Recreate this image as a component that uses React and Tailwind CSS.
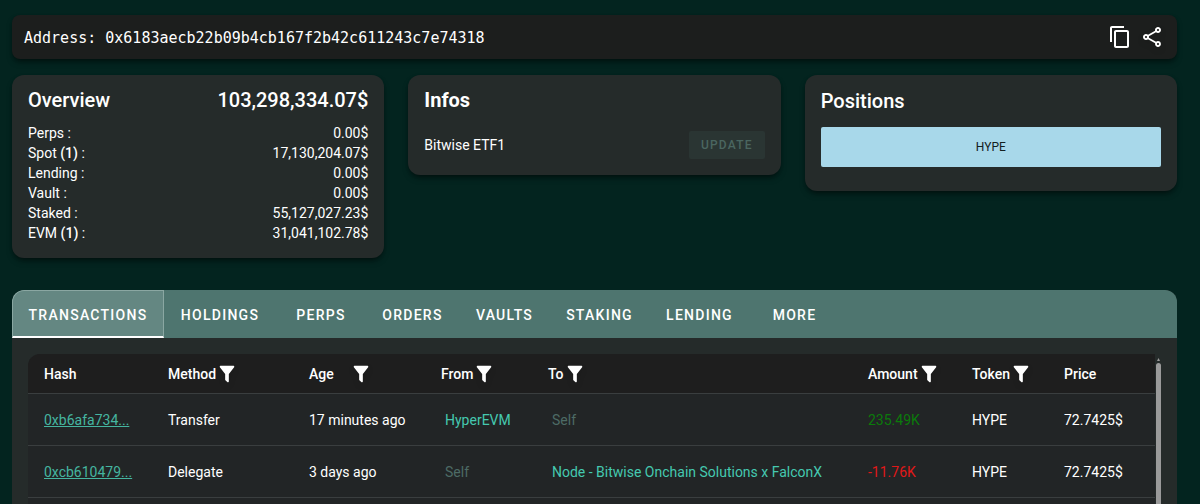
import { MdContentCopy, MdOutlineShare } from "react-icons/md";

const balances = [
  { label: "Perps", value: "0.00$" },
  { label: "Spot", count: "(1)", value: "17,130,204.07$" },
  { label: "Lending", value: "0.00$" },
  { label: "Vault", value: "0.00$" },
  { label: "Staked", value: "55,127,027.23$" },
  { label: "EVM", count: "(1)", value: "31,041,102.78$" },
];

const tabs = [
  { name: "Transactions", width: "w-38" },
  { name: "Holdings", width: "w-28" },
  { name: "Perps", width: "w-[90px]" },
  { name: "Orders", width: "w-[93px]" },
  { name: "Vaults", width: "w-[91px]" },
  { name: "Staking", width: "w-[99px]" },
  { name: "Lending", width: "w-[101px]" },
  { name: "More", width: "w-[89px]" },
];

const columns = [
  { name: "Hash", width: "w-[124px]" },
  { name: "Method", width: "w-[141px]", filter: true },
  { name: "Age", width: "w-[132px]", filter: true, gap: "gap-4" },
  { name: "From", width: "w-[107px]", filter: true },
  { name: "To", width: "", filter: true },
  { name: "Amount", width: "w-[104px]", filter: true },
  { name: "Token", width: "w-[92px]", filter: true },
  { name: "Price", width: "w-[107px]" },
];

const rows = [
  { hash: "0xb6afa734...", method: "Transfer", age: "17 minutes ago", from: "HyperEVM", to: "Self", amount: "235.49K", token: "HYPE", price: "72.7425$" },
  { hash: "0xcb610479...", method: "Delegate", age: "3 days ago", from: "Self", to: "Node - Bitwise Onchain Solutions x FalconX", amount: "-11.76K", token: "HYPE", price: "72.7425$" },
];

function FilterIcon() {
  return (
    <svg viewBox="0 0 24 24" className="size-[22px] fill-current drop-shadow-md" aria-hidden="true">
      <path d="M14,12V19.88C14.04,20.18 13.94,20.5 13.71,20.71C13.32,21.1 12.69,21.1 12.3,20.71L10.29,18.7C10.06,18.47 9.96,18.16 10,17.87V12H9.97L4.21,4.62C3.87,4.19 3.95,3.56 4.38,3.22C4.57,3.08 4.78,3 5,3H19C19.22,3 19.43,3.08 19.62,3.22C20.05,3.56 20.13,4.19 19.79,4.62L14.03,12H14Z" />
    </svg>
  );
}

function Party({ name }) {
  if (name === "Self") return <span className="ml-1 text-[#4d6b65]">Self</span>;
  return <a href="#account" className="ml-1 text-[#45c9b0]">{name}</a>;
}

function Card({ children, className = "" }) {
  return (
    <section className={`rounded-xl bg-[#252b2a] px-4 shadow-md shadow-black/40 ${className}`}>
      {children}
    </section>
  );
}

export default function App() {
  return (
    <div className="flex h-screen flex-col overflow-hidden bg-[#03241f] pt-[15px] pr-[23px] pl-3 font-[Roboto,sans-serif] text-sm text-white">
      <header className="flex h-11 shrink-0 items-center justify-between rounded-lg bg-[#1c1e1d] pr-[13px] pl-3 shadow-md shadow-black/40">
        <p className="pt-1 font-['DejaVu_Sans_Mono',monospace] text-[15px]">
          Address: 0x6183aecb22b09b4cb167f2b42c611243c7e74318
        </p>
        <div className="flex items-center gap-2">
          <button type="button" aria-label="Copy address"><MdContentCopy className="size-6" /></button>
          <button type="button" aria-label="Share"><MdOutlineShare className="size-6 drop-shadow-md" /></button>
        </div>
      </header>

      <div className="mt-4 grid shrink-0 grid-cols-3 items-start gap-6">
        <Card className="pt-[11px] pb-[15px]">
          <div className="flex items-center justify-between text-xl leading-7 font-medium">
            <h2>Overview</h2>
            <span>103,298,334.07$</span>
          </div>
          <dl className="mt-[9px]">
            {balances.map((b) => (
              <div key={b.label} className="flex justify-between leading-5">
                <dt>{b.label} {b.count && <span className="font-medium">{b.count} </span>}:</dt>
                <dd>{b.value}</dd>
              </div>
            ))}
          </dl>
        </Card>
        <Card className="pt-[11px] pb-4">
          <h2 className="text-xl leading-7 font-bold">Infos</h2>
          <div className="mt-[17px] flex items-center justify-between">
            <span>Bitwise ETF1</span>
            <button type="button" disabled className="h-7 rounded-xs bg-[#2a3533] px-3 text-xs font-medium tracking-widest text-[#4a6660] uppercase">
              Update
            </button>
          </div>
        </Card>
        <Card className="pt-3 pb-6">
          <h2 className="text-xl leading-7 font-medium">Positions</h2>
          <div className="mt-3 flex h-10 items-center justify-center rounded-xs bg-[#a8d8ea] text-xs text-[#14201f]">
            HYPE
          </div>
        </Card>
      </div>

      <section className="mt-8 flex min-h-0 flex-1 flex-col overflow-hidden rounded-t-xl bg-[#252b2a]">
        <div role="tablist" className="flex h-12 shrink-0 bg-[#4e756f]">
          {tabs.map((t, i) => (
            <button
              key={t.name}
              type="button"
              role="tab"
              aria-selected={i === 0}
              className={`${t.width} shrink-0 pt-0.5 font-medium tracking-[0.09em] uppercase ${i === 0 ? "rounded-tl-xl border border-b-2 border-[#8aa7a2] border-b-white bg-[#648782]" : ""}`}
            >
              {t.name}
            </button>
          ))}
        </div>
        <div className="flex min-h-0 flex-1 pt-4 pr-4 pl-4">
          <div className="min-w-0 flex-1 overflow-hidden rounded-tl-xl bg-[#222526]">
            <table className="w-full table-fixed text-left">
              <thead className="bg-[#1e1e1e]">
                <tr className="h-[39px] border-b border-[#3a3e3f]">
                  {columns.map((c) => (
                    <th key={c.name} className={`${c.width} p-0 pt-0.5 pl-4 font-medium`}>
                      <span className={`flex items-center ${c.gap || ""}`}>
                        {c.name}
                        {c.filter && <button type="button" aria-label={`Filter ${c.name}`}><FilterIcon /></button>}
                      </span>
                    </th>
                  ))}
                </tr>
              </thead>
              <tbody>
                {rows.map((r) => (
                  <tr key={r.hash} className="h-13 border-b border-[#3a3e3f] whitespace-nowrap *:pt-0.5 *:pl-4">
                    <td><a href="#tx" className="text-[#45b5a0] underline">{r.hash}</a></td>
                    <td>{r.method}</td>
                    <td>{r.age}</td>
                    <td><Party name={r.from} /></td>
                    <td><Party name={r.to} /></td>
                    <td className={r.amount.startsWith("-") ? "text-[#e01818]" : "text-[#0b7a0b]"}>{r.amount}</td>
                    <td>{r.token}</td>
                    <td>{r.price}</td>
                  </tr>
                ))}
              </tbody>
            </table>
          </div>
          <div className="flex w-1.5 flex-col items-center pt-1 pl-px" aria-hidden="true">
            <svg viewBox="0 0 5 3" className="h-[3px] w-[5px] fill-[#9a9a9a]"><path d="M2.500 0L4 3H1Z" /></svg>
            <div className="mt-0.5 w-[5px] flex-1 rounded-t-full bg-[#9a9a9a]" />
          </div>
        </div>
      </section>
    </div>
  );
}
